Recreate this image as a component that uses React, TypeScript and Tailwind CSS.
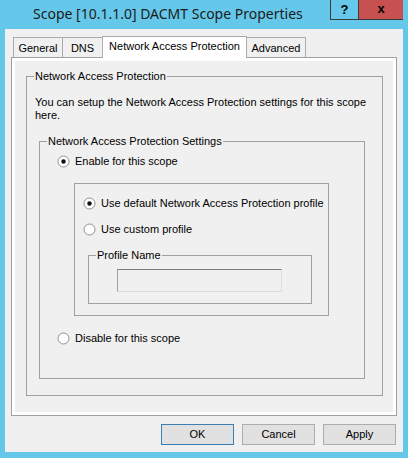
import React from "react";

const font = { fontFamily: '"Liberation Sans", Arial, sans-serif' };

interface RadioProps {
  label: string;
  checked?: boolean;
}

const Radio: React.FC<RadioProps> = ({ label, checked }) => (
  <div className="flex items-center gap-[5px] h-[13px] leading-[13px]">
    <svg width="13" height="13" viewBox="0 0 13 13" className="shrink-0">
      <circle cx="6.5" cy="6.5" r="5.5" fill="#fff" stroke="#8e8f8f" />
      {checked && <circle cx="6.5" cy="6.5" r="2.2" fill="#111" />}
    </svg>
    <span>{label}</span>
  </div>
);

const Tab: React.FC<{ label: string; width: string; active?: boolean }> = ({
  label,
  width,
  active,
}) =>
  active ? (
    <div
      className={`${width} -ml-px h-[22px] -mb-px relative z-10 bg-white border border-b-0 border-[#acacac] flex items-center justify-center pb-[2px]`}
    >
      {label}
    </div>
  ) : (
    <div
      className={`${width} -ml-px h-[20px] bg-[#f0f0f0] border border-b-0 border-[#acacac] flex items-center justify-center pt-[1px] first:ml-0`}
    >
      {label}
    </div>
  );

export default function App() {
  return (
    <div
      className="w-[408px] h-[458px] bg-[#65c8ea] flex flex-col text-[11px] text-black"
      style={font}
    >
      {/* Title bar */}
      <div className="h-[29px] flex items-start shrink-0">
        <div
          className="pl-[33px] pt-[4px] text-[14px] leading-[20px] text-[#1b1b1b]"
          style={{ fontFamily: '"Noto Sans", "Open Sans", sans-serif' }}
        >
          Scope [10.1.1.0] DACMT Scope Properties
        </div>
        <div className="ml-auto mr-[5px] flex h-[20px]">
          <div className="w-[28px] border-l border-b border-[#3a3a3a] flex items-center justify-center font-bold text-[13px]">
            ?
          </div>
          <div className="w-[45px] bg-[#c75050] border-l border-b border-[#3a3a3a] flex items-center justify-center font-bold text-[13px] pb-[1px]">
            x
          </div>
        </div>
      </div>

      {/* Client area */}
      <div className="mx-[5px] mb-[6px] flex-1 bg-[#f0f0f0] px-[6px] pt-[7px] flex flex-col">
        {/* Tabs */}
        <div className="flex items-end h-[21px] ml-[2px]">
          <Tab label="General" width="w-[50px]" />
          <Tab label="DNS" width="w-[41px]" />
          <Tab label="Network Access Protection" width="w-[145px]" active />
          <Tab label="Advanced" width="w-[60px]" />
        </div>

        {/* Tab panel */}
        <div className="h-[359px] border border-[#a0a0a0] shadow-[inset_0_0_0_3px_#fff] pt-[12px] pl-[14px]">
          <fieldset className="w-[357px] border border-[#a0a0a0] pl-[7px] pb-[16px]">
            <legend className="px-[1px] leading-[13px]">Network Access Protection</legend>
            <p className="mt-[13px] pl-[1px] leading-[13px] w-[340px]">
              You can setup the Network Access Protection settings for this scope here.
            </p>

            <fieldset className="mt-[13px] ml-[5px] w-[326px] border border-[#a0a0a0] pl-[7px] pb-[33px]">
              <legend className="px-[1px] leading-[13px]">
                Network Access Protection Settings
              </legend>
              <div className="mt-[7px] ml-[10px]">
                <Radio label="Enable for this scope" checked />
              </div>

              <div className="mt-[15px] ml-[27px] w-[255px] h-[133px] border border-[#a0a0a0] pl-[8px] pt-[13px]">
                <Radio label="Use default Network Access Protection profile" checked />
                <div className="mt-[13px]">
                  <Radio label="Use custom profile" />
                </div>
                <fieldset className="mt-[13px] ml-[5px] w-[224px] border border-[#a0a0a0] pl-[7px] pb-[11px]">
                  <legend className="px-[1px] leading-[13px]">Profile Name</legend>
                  <div className="mt-[7px] ml-[21px] w-[165px] h-[23px] bg-[#f0f0f0] border border-[#dcdcdc] border-t-[#7a7a7a] border-l-[#a0a0a0]" />
                </fieldset>
              </div>

              <div className="mt-[16px] ml-[10px]">
                <Radio label="Disable for this scope" />
              </div>
            </fieldset>
          </fieldset>
        </div>

        {/* Buttons */}
        <div className="flex justify-end gap-[8px] mt-[8px] mr-[1px]">
          <button className="w-[73px] h-[21px] bg-[#e1e1e1] border border-[#3c7fb1] leading-[19px]">
            OK
          </button>
          <button className="w-[73px] h-[21px] bg-[#e1e1e1] border border-[#adadad] leading-[19px]">
            Cancel
          </button>
          <button className="w-[73px] h-[21px] bg-[#e1e1e1] border border-[#adadad] leading-[19px]">
            Apply
          </button>
        </div>
      </div>
    </div>
  );
}
